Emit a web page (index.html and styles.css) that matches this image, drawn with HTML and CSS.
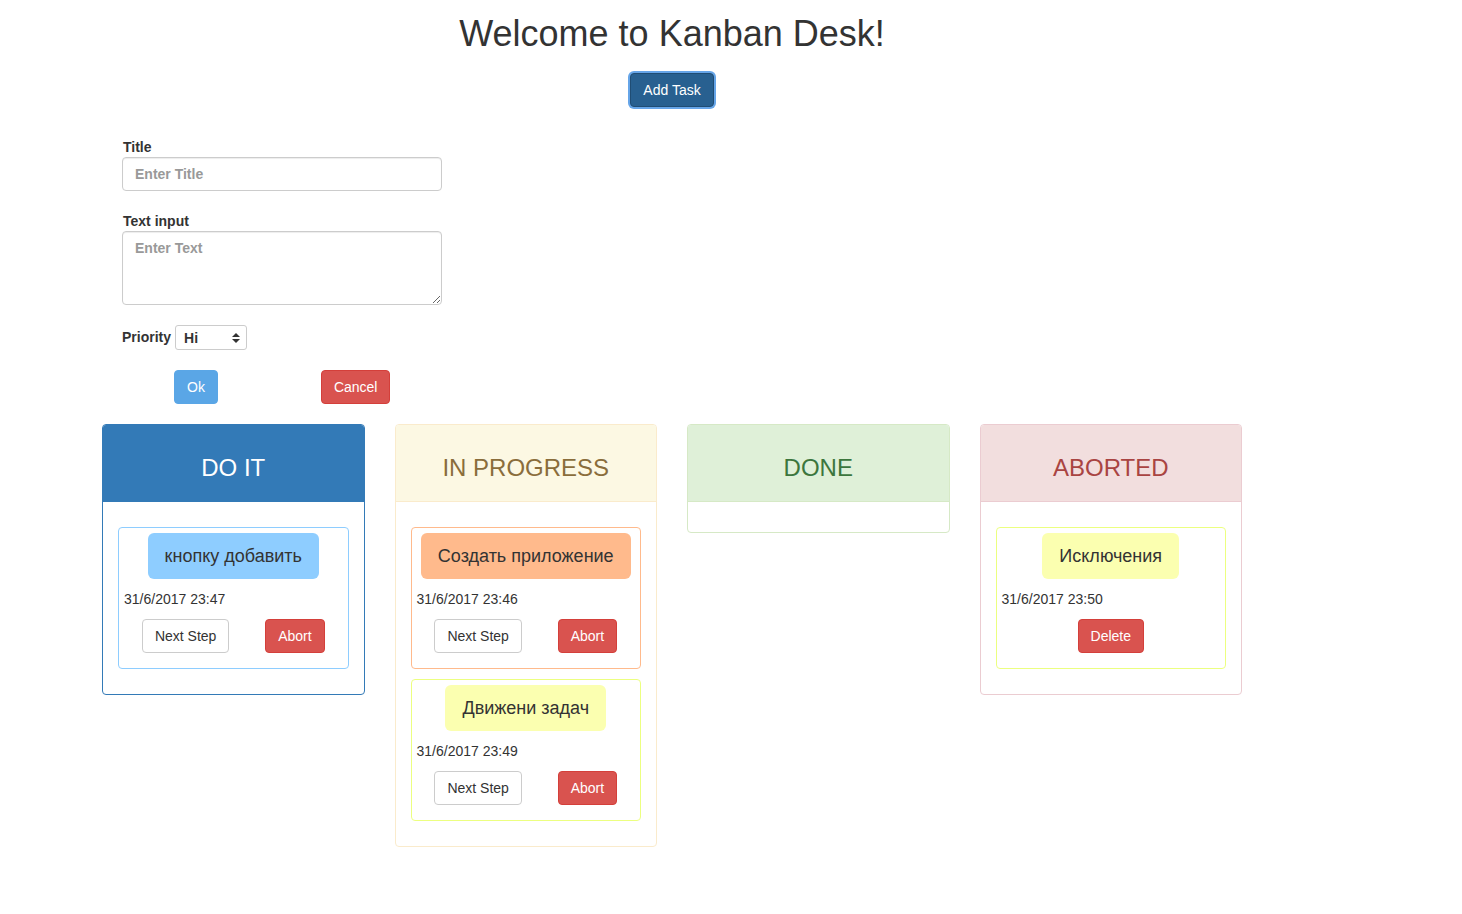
FILE: index.html
```html
<!DOCTYPE html>
<html lang="ru">
<head>
<meta charset="utf-8">
<title>Kanban Desk</title>
<link rel="stylesheet" href="styles.css">
</head>
<body>
<div class="app">
  <header class="top">
    <h1 class="title">Welcome to Kanban Desk!</h1>
    <button class="btn btn-add">Add Task</button>
  </header>

  <form class="task-form">
    <div class="form-group">
      <label class="lbl">Title</label>
      <input class="field field-input" type="text" placeholder="Enter Title">
    </div>
    <div class="form-group">
      <label class="lbl">Text input</label>
      <textarea class="field field-area" placeholder="Enter Text"></textarea>
    </div>
    <div class="priority-row">
      <label class="lbl">Priority</label>
      <div class="select-wrap">
        <select class="select">
          <option>Hi</option>
          <option>Mid</option>
          <option>Low</option>
        </select>
        <svg class="select-arrows" width="8" height="10" viewBox="0 0 8 10"><path d="M4 0 L8 4 H0 Z M0 6 H8 L4 10 Z" fill="#333"/></svg>
      </div>
    </div>
    <div class="form-actions">
      <button type="button" class="btn btn-ok">Ok</button>
      <button type="button" class="btn btn-danger">Cancel</button>
    </div>
  </form>

  <main class="board">
    <section class="panel panel-primary">
      <div class="panel-heading"><h3 class="panel-title">DO IT</h3></div>
      <div class="panel-body">
        <div class="card card-blue">
          <div class="pill pill-blue">кнопку добавить</div>
          <div class="date">31/6/2017 23:47</div>
          <div class="card-actions">
            <button class="btn btn-default">Next Step</button>
            <button class="btn btn-danger">Abort</button>
          </div>
        </div>
      </div>
    </section>

    <section class="panel panel-warning">
      <div class="panel-heading"><h3 class="panel-title">IN PROGRESS</h3></div>
      <div class="panel-body">
        <div class="card card-orange">
          <div class="pill pill-orange">Создать приложение</div>
          <div class="date">31/6/2017 23:46</div>
          <div class="card-actions">
            <button class="btn btn-default">Next Step</button>
            <button class="btn btn-danger">Abort</button>
          </div>
        </div>
        <div class="card card-yellow">
          <div class="pill pill-yellow">Движени задач</div>
          <div class="date">31/6/2017 23:49</div>
          <div class="card-actions">
            <button class="btn btn-default">Next Step</button>
            <button class="btn btn-danger">Abort</button>
          </div>
        </div>
      </div>
    </section>

    <section class="panel panel-success">
      <div class="panel-heading"><h3 class="panel-title">DONE</h3></div>
      <div class="panel-body"></div>
    </section>

    <section class="panel panel-danger">
      <div class="panel-heading"><h3 class="panel-title">ABORTED</h3></div>
      <div class="panel-body">
        <div class="card card-yellow">
          <div class="pill pill-yellow">Исключения</div>
          <div class="date">31/6/2017 23:50</div>
          <div class="card-actions card-actions-center">
            <button class="btn btn-danger">Delete</button>
          </div>
        </div>
      </div>
    </section>
  </main>
</div>
</body>
</html>
```

FILE: styles.css
```css
* { box-sizing: border-box; }

html, body {
  margin: 0;
  padding: 0;
  background: #fff;
}

body {
  font-family: "Liberation Sans", Arial, Helvetica, sans-serif;
  font-size: 14px;
  line-height: 20px;
  color: #333;
}

.app {
  width: 1344px;
}

.top {
  display: flex;
  flex-direction: column;
  align-items: center;
}

.title {
  margin: 14px 0 0;
  font-size: 36px;
  font-weight: 500;
  line-height: 40px;
  color: #333;
}

.btn {
  display: inline-block;
  font-family: inherit;
  font-size: 14px;
  line-height: 20px;
  padding: 6px 12px;
  border: 1px solid transparent;
  border-radius: 4px;
  cursor: pointer;
  white-space: nowrap;
}

.btn-add {
  margin-top: 19px;
  background: #286090;
  border-color: #204d74;
  color: #fff;
  box-shadow: 0 0 0 2px #66a5e8;
}

.task-form {
  margin: 30px 0 0 122px;
  width: 320px;
  font-weight: bold;
}

.form-group {
  margin-bottom: 20px;
}

.lbl {
  display: block;
  font-weight: bold;
  line-height: 20px;
  padding-left: 1px;
}

.field {
  display: block;
  width: 320px;
  font-family: inherit;
  font-size: 14px;
  font-weight: bold;
  line-height: 20px;
  color: #555;
  padding: 6px 12px;
  border: 1px solid #ccc;
  border-radius: 4px;
  box-shadow: inset 0 1px 1px rgba(0,0,0,.075);
  background: #fff;
}

.field::placeholder { color: #999; }

.field-input { height: 34px; }

.field-area {
  height: 74px;
  resize: vertical;
}

.priority-row {
  display: flex;
  align-items: center;
  gap: 4px;
  height: 25px;
}

.priority-row .lbl {
  padding-left: 0;
  margin-top: -2px;
}

.select-wrap {
  position: relative;
  width: 72px;
  height: 25px;
}

.select {
  appearance: none;
  -webkit-appearance: none;
  width: 72px;
  height: 25px;
  padding: 2px 8px;
  font-family: inherit;
  font-size: 14px;
  font-weight: bold;
  color: #333;
  background: #fff;
  border: 1px solid #ccc;
  border-radius: 3px;
}

.select-arrows {
  position: absolute;
  right: 7px;
  top: 8px;
  pointer-events: none;
}

.form-actions {
  display: flex;
  gap: 103px;
  margin-top: 20px;
  padding-left: 52px;
}

.form-actions .btn { font-weight: normal; }

.btn-ok {
  background: #5aa6e6;
  border-color: #5aa6e6;
  color: #fff;
}

.btn-danger {
  background: #d9534f;
  border-color: #d43f3a;
  color: #fff;
}

.btn-default {
  background: #fff;
  border-color: #ccc;
  color: #333;
}

.board {
  display: grid;
  grid-template-columns: repeat(4, 262.5px);
  column-gap: 30px;
  align-items: start;
  margin-top: 20px;
  padding-left: 102px;
}

.panel {
  border: 1px solid #ddd;
  border-radius: 4px;
  background: #fff;
  overflow: hidden;
}

.panel-heading {
  padding: 30px 15px 20px;
  border-bottom: 1px solid transparent;
  text-align: center;
}

.panel-title {
  margin: 0;
  font-size: 24px;
  font-weight: 500;
  line-height: 26px;
}

.panel-primary { border-color: #337ab7; }
.panel-primary .panel-heading { background: #337ab7; border-bottom-color: #337ab7; color: #fff; }

.panel-warning { border-color: #faebcc; }
.panel-warning .panel-heading { background: #fcf8e3; border-bottom-color: #faebcc; color: #8a6d3b; }

.panel-success { border-color: #d6e9c6; }
.panel-success .panel-heading { background: #dff0d8; border-bottom-color: #d6e9c6; color: #3c763d; }

.panel-danger { border-color: #ebccd1; }
.panel-danger .panel-heading { background: #f2dede; border-bottom-color: #ebccd1; color: #a94442; }

.panel-body {
  padding: 15px;
}

.card {
  margin: 10px 0;
  padding: 5px 5px 15px;
  border: 1px solid #ddd;
  border-radius: 4px;
  display: flex;
  flex-direction: column;
}

.card-blue { border-color: #8ecdff; }
.card-orange { border-color: #ffba8c; }
.card-yellow { border-color: #ecff80; }

.pill {
  align-self: center;
  padding: 12px 17px;
  font-size: 18px;
  line-height: 22px;
  border-radius: 6px;
  color: #333;
}

.pill-blue { background: #8ecdff; }
.pill-orange { background: #ffba8c; }
.pill-yellow { background: #fbffb0; }

.date {
  margin-top: 10px;
  line-height: 20px;
}

.card-actions {
  display: flex;
  justify-content: space-around;
  margin-top: 10px;
}

.card-actions-center { justify-content: center; }
```
